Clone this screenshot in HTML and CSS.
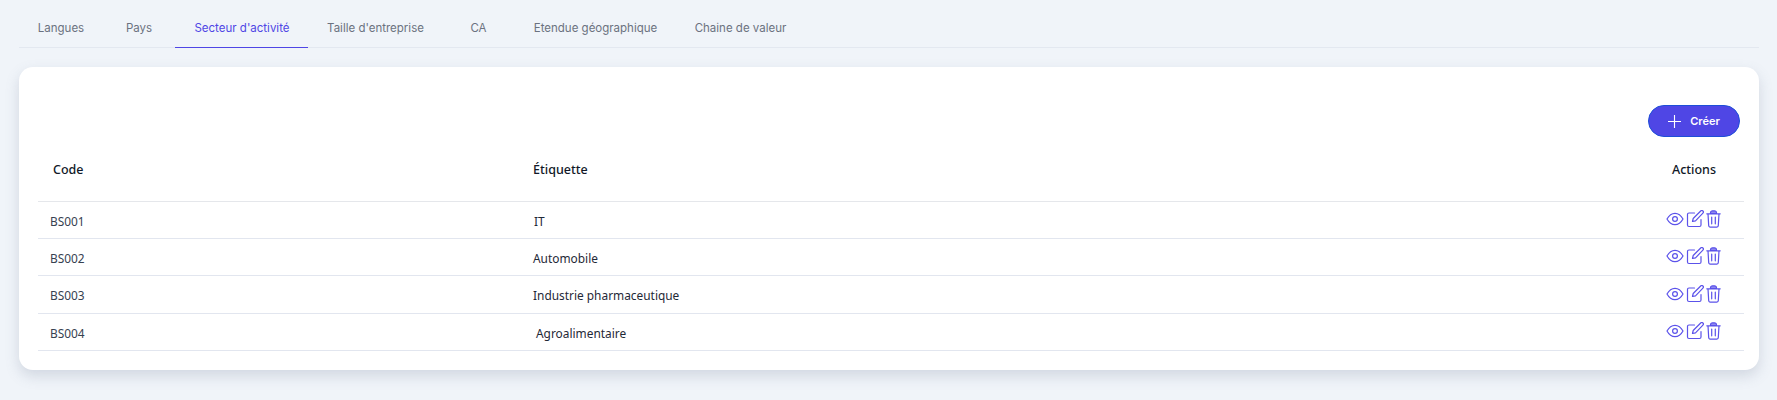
FILE: index.html
```html
<!DOCTYPE html>
<html lang="fr">
<head>
    <meta charset="UTF-8">
    <meta name="viewport" content="width=device-width, initial-scale=1.0">
    <title>Secteur d'activité</title>

    <link rel="stylesheet" href="styles.css">

</head>
<body>
    <nav class="tabs">
        <a class="tab tab-langues" href="#">Langues</a>
        <a class="tab tab-pays" href="#">Pays</a>
        <a class="tab tab-active" href="#">Secteur d'activité</a>
        <a class="tab tab-taille" href="#">Taille d'entreprise</a>
        <a class="tab tab-ca" href="#">CA</a>
        <a class="tab tab-etendue" href="#">Etendue géographique</a>
        <a class="tab tab-chaine" href="#">Chaine de valeur</a>
    </nav>

    <main class="card">
        <div class="toolbar">
            <button class="btn-create" type="button">
                <svg class="btn-icon" viewBox="0 0 14 14"><path d="M7 0v14M0 7h14"/></svg>
                <span>Créer</span>
            </button>
        </div>

        <table class="table">
            <thead>
                <tr>
                    <th class="col-code">Code</th>
                    <th class="col-label">Étiquette</th>
                    <th class="col-actions">Actions</th>
                </tr>
            </thead>
            <tbody>
                <tr>
                    <td>BS001</td>
                    <td class="cell-it">IT</td>
                    <td class="cell-actions">
                        <div class="actions">
                            <svg class="icon icon-eye" viewBox="0 0 18 14"><path d="M1 7c2-3.600 4.800-5.700 8-5.700s6 2.100 8 5.700c-2 3.600-4.800 5.700-8 5.700S3 10.600 1 7z"/><circle cx="9" cy="7" r="2.400"/></svg>
                            <svg class="icon icon-edit" viewBox="0 0 18 18"><path d="M8.500 3H3a1.500 1.500 0 0 0-1.500 1.500V15A1.500 1.500 0 0 0 3 16.500h10.500A1.500 1.500 0 0 0 15 15V9.500"/><path d="M6.500 11.500l.7-3L14.700 1a1.500 1.500 0 0 1 2.200 2.200L9.500 10.800z"/></svg>
                            <svg class="icon icon-trash" viewBox="0 0 15 18"><path class="lid" d="M4.500 3.500V2.800A2 2 0 0 1 6.500.8h2a2 2 0 0 1 2 2v.7z"/><path d="M.8 3.800h13.400M2 3.800l.7 11.800a1.500 1.500 0 0 0 1.500 1.500h6.600a1.500 1.500 0 0 0 1.500-1.500L13 3.800M5.700 7v6.800M9.300 7v6.800"/></svg>
                        </div>
                    </td>
                </tr>
                <tr>
                    <td>BS002</td>
                    <td>Automobile</td>
                    <td class="cell-actions">
                        <div class="actions">
                            <svg class="icon icon-eye" viewBox="0 0 18 14"><path d="M1 7c2-3.600 4.800-5.700 8-5.700s6 2.100 8 5.700c-2 3.600-4.800 5.700-8 5.700S3 10.600 1 7z"/><circle cx="9" cy="7" r="2.400"/></svg>
                            <svg class="icon icon-edit" viewBox="0 0 18 18"><path d="M8.500 3H3a1.500 1.500 0 0 0-1.500 1.500V15A1.500 1.500 0 0 0 3 16.500h10.500A1.500 1.500 0 0 0 15 15V9.500"/><path d="M6.500 11.500l.7-3L14.700 1a1.500 1.500 0 0 1 2.200 2.200L9.500 10.800z"/></svg>
                            <svg class="icon icon-trash" viewBox="0 0 15 18"><path class="lid" d="M4.500 3.500V2.800A2 2 0 0 1 6.500.8h2a2 2 0 0 1 2 2v.7z"/><path d="M.8 3.800h13.400M2 3.800l.7 11.800a1.500 1.500 0 0 0 1.500 1.500h6.600a1.500 1.500 0 0 0 1.500-1.500L13 3.800M5.700 7v6.800M9.300 7v6.800"/></svg>
                        </div>
                    </td>
                </tr>
                <tr class="row-tall">
                    <td>BS003</td>
                    <td class="cell-industrie">Industrie pharmaceutique</td>
                    <td class="cell-actions">
                        <div class="actions">
                            <svg class="icon icon-eye" viewBox="0 0 18 14"><path d="M1 7c2-3.600 4.800-5.700 8-5.700s6 2.100 8 5.700c-2 3.600-4.800 5.700-8 5.700S3 10.600 1 7z"/><circle cx="9" cy="7" r="2.400"/></svg>
                            <svg class="icon icon-edit" viewBox="0 0 18 18"><path d="M8.500 3H3a1.500 1.500 0 0 0-1.500 1.500V15A1.500 1.500 0 0 0 3 16.500h10.500A1.500 1.500 0 0 0 15 15V9.500"/><path d="M6.500 11.500l.7-3L14.700 1a1.500 1.500 0 0 1 2.200 2.200L9.500 10.800z"/></svg>
                            <svg class="icon icon-trash" viewBox="0 0 15 18"><path class="lid" d="M4.500 3.500V2.800A2 2 0 0 1 6.500.8h2a2 2 0 0 1 2 2v.7z"/><path d="M.8 3.800h13.400M2 3.800l.7 11.800a1.500 1.500 0 0 0 1.500 1.500h6.600a1.500 1.500 0 0 0 1.500-1.500L13 3.800M5.700 7v6.800M9.300 7v6.800"/></svg>
                        </div>
                    </td>
                </tr>
                <tr>
                    <td>BS004</td>
                    <td class="cell-agro">Agroalimentaire</td>
                    <td class="cell-actions">
                        <div class="actions">
                            <svg class="icon icon-eye" viewBox="0 0 18 14"><path d="M1 7c2-3.600 4.800-5.700 8-5.700s6 2.100 8 5.700c-2 3.600-4.800 5.700-8 5.700S3 10.600 1 7z"/><circle cx="9" cy="7" r="2.400"/></svg>
                            <svg class="icon icon-edit" viewBox="0 0 18 18"><path d="M8.500 3H3a1.500 1.500 0 0 0-1.500 1.500V15A1.500 1.500 0 0 0 3 16.500h10.500A1.500 1.500 0 0 0 15 15V9.500"/><path d="M6.500 11.500l.7-3L14.700 1a1.500 1.500 0 0 1 2.200 2.200L9.500 10.800z"/></svg>
                            <svg class="icon icon-trash" viewBox="0 0 15 18"><path class="lid" d="M4.500 3.500V2.800A2 2 0 0 1 6.500.8h2a2 2 0 0 1 2 2v.7z"/><path d="M.8 3.800h13.400M2 3.800l.7 11.800a1.500 1.500 0 0 0 1.500 1.500h6.600a1.500 1.500 0 0 0 1.500-1.500L13 3.800M5.700 7v6.800M9.300 7v6.800"/></svg>
                        </div>
                    </td>
                </tr>
            </tbody>
        </table>
    </main>
</body>
</html>
```

FILE: styles.css
```css
html{
    box-sizing: border-box;
    font-family: "Noto Sans", sans-serif;
    font-size: 16px;
}

*, *::after, *::before{
    box-sizing: inherit;
}

body{
    margin: 0;
    height: 400px;
    padding: 0 18px 0 19px;
    background-color: #f0f4f9;
    overflow: hidden;
}

/* Onglets */
.tabs{
    display: flex;
    height: 48px;
    border-bottom: 1px solid #e3e8f0;
}

.tab{
    display: flex;
    align-items: center;
    justify-content: center;
    height: 48px;
    padding-top: 8px;
    font-family: Inter, sans-serif;
    font-size: 11.5px;
    color: #6b7280;
    text-decoration: none;
}

.tab-langues{ width: 85px; padding-right: 1px; }
.tab-pays{ width: 66px; margin-left: 2px; }
.tab-active{
    width: 133px;
    margin-left: 3px;
    padding-left: 1px;
    color: #4f46e5;
    border-bottom: 1px solid #4f46e5;
}
.tab-taille{ width: 135px; }
.tab-ca{ width: 55px; margin-left: 8px; }
.tab-etendue{ width: 162px; margin-left: 8px; padding-left: 1px; }
.tab-chaine{ width: 131px; margin-left: -1px; }

/* Carte */
.card{
    margin-top: 19px;
    height: 303px;
    padding: 38px 15px 0 19px;
    background-color: #fff;
    border-radius: 14px;
    box-shadow: 0 6px 14px rgba(100, 116, 139, .22);
}

.toolbar{
    display: flex;
    justify-content: flex-end;
    padding-right: 4px;
}

.btn-create{
    display: flex;
    align-items: center;
    justify-content: center;
    gap: 9px;
    width: 92px;
    height: 32px;
    padding: 0;
    color: #fff;
    font-family: Inter, sans-serif;
    font-size: 11px;
    font-weight: 600;
    background-color: #4f46e5;
    border: 1px solid #1d4ed8;
    border-radius: 16px;
}

.btn-icon{
    width: 13px;
    height: 13px;
    stroke: #fff;
    stroke-width: 1.2;
    fill: none;
}

/* Tableau */
.table{
    width: 100%;
    table-layout: fixed;
    border-collapse: collapse;
    font-size: 11.9px;
    color: #374151;
}

.table th{
    height: 64px;
    padding: 2px 0 0;
    font-size: 12.5px;
    font-weight: 500;
    color: #111827;
    text-align: left;
    border-bottom: 1px solid #e5e7eb;
}

.col-code{ width: 495px; padding-left: 15px !important; }
.col-label{ width: auto; }
.col-actions{ width: 100px; text-align: center !important; }

.table td{
    height: 37px;
    padding: 2px 0 0 12px;
    border-bottom: 1px solid #e2e6ef;
}

.table td:nth-child(2){
    padding-left: 0;
    color: #1f2937;
}

.row-tall td{ height: 38px; }
.cell-it{ padding-left: 1px !important; }
.cell-agro{ padding-left: 3px !important; }
.cell-actions{ padding: 0 !important; }

.actions{
    display: flex;
    justify-content: center;
    align-items: center;
    gap: 2px;
    padding: 0 2px 1px 0;
}

.icon{
    fill: none;
    stroke: #5b52ea;
    stroke-width: 1.2;
    stroke-linecap: round;
    stroke-linejoin: round;
}

.icon-eye{ width: 18px; height: 14px; }
.icon-edit{ width: 18px; height: 18px; }
.icon-trash{ width: 15px; height: 18px; }
.lid{ fill: #8f89ef; }
```
